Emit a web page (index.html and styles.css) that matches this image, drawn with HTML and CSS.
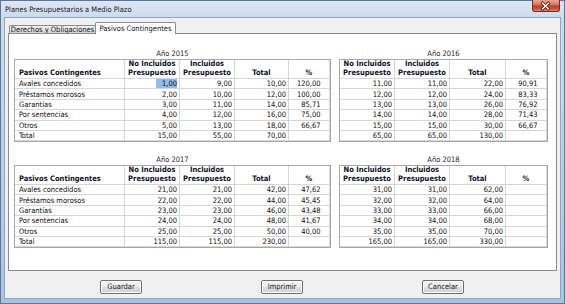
FILE: index.html
```html
<!DOCTYPE html>
<html lang="es">
<head>
<meta charset="utf-8">
<title>Planes Presupuestarios a Medio Plazo</title>
<link rel="stylesheet" href="styles.css">
</head>
<body>
<div class="window">
  <div class="titlebar">
    <span class="title">Planes Presupuestarios a Medio Plazo</span>
    <div class="close">
      <svg width="28" height="12" viewBox="0 0 28 12">
        <path d="M11 3.2 L17 8.8 M17 3.2 L11 8.8" stroke="#6b2216" stroke-width="3.2" stroke-linecap="square" fill="none"/>
        <path d="M11 3.2 L17 8.8 M17 3.2 L11 8.8" stroke="#ffffff" stroke-width="1.5" stroke-linecap="square" fill="none"/>
      </svg>
    </div>
  </div>
  <div class="client">
    <div class="tabs">
      <div class="tab">Derechos y Obligaciones</div>
      <div class="tab active">Pasivos Contingentes</div>
    </div>
    <div class="panel">
      <div class="years">
        <section class="block">
          <div class="year">Año 2015</div>
          <div class="tbl wide">
            <div class="c h lbl">Pasivos Contingentes</div>
            <div class="c h">No Incluidos<br>Presupuesto</div>
            <div class="c h">Incluidos<br>Presupuesto</div>
            <div class="c h">Total</div>
            <div class="c h">%</div>

            <div class="c lbl">Avales concedidos</div><div class="c"><span class="sel">1,00</span></div><div class="c">9,00</div><div class="c">10,00</div><div class="c pct">120,00</div>
            <div class="c lbl">Préstamos morosos</div><div class="c">2,00</div><div class="c">10,00</div><div class="c">12,00</div><div class="c pct">100,00</div>
            <div class="c lbl">Garantías</div><div class="c">3,00</div><div class="c">11,00</div><div class="c">14,00</div><div class="c pct">85,71</div>
            <div class="c lbl">Por sentencias</div><div class="c">4,00</div><div class="c">12,00</div><div class="c">16,00</div><div class="c pct">75,00</div>
            <div class="c lbl">Otros</div><div class="c">5,00</div><div class="c">13,00</div><div class="c">18,00</div><div class="c pct">66,67</div>
            <div class="c lbl">Total</div><div class="c">15,00</div><div class="c">55,00</div><div class="c">70,00</div><div class="c pct"></div>
          </div>
        </section>
        <section class="block">
          <div class="year">Año 2016</div>
          <div class="tbl narrow">
            <div class="c h">No Incluidos<br>Presupuesto</div>
            <div class="c h">Incluidos<br>Presupuesto</div>
            <div class="c h">Total</div>
            <div class="c h">%</div>

            <div class="c">11,00</div><div class="c">11,00</div><div class="c">22,00</div><div class="c pct">90,91</div>
            <div class="c">12,00</div><div class="c">12,00</div><div class="c">24,00</div><div class="c pct">83,33</div>
            <div class="c">13,00</div><div class="c">13,00</div><div class="c">26,00</div><div class="c pct">76,92</div>
            <div class="c">14,00</div><div class="c">14,00</div><div class="c">28,00</div><div class="c pct">71,43</div>
            <div class="c">15,00</div><div class="c">15,00</div><div class="c">30,00</div><div class="c pct">66,67</div>
            <div class="c">65,00</div><div class="c">65,00</div><div class="c">130,00</div><div class="c pct"></div>
          </div>
        </section>
        <section class="block">
          <div class="year">Año 2017</div>
          <div class="tbl wide">
            <div class="c h lbl">Pasivos Contingentes</div>
            <div class="c h">No Incluidos<br>Presupuesto</div>
            <div class="c h">Incluidos<br>Presupuesto</div>
            <div class="c h">Total</div>
            <div class="c h">%</div>

            <div class="c lbl">Avales concedidos</div><div class="c">21,00</div><div class="c">21,00</div><div class="c">42,00</div><div class="c pct">47,62</div>
            <div class="c lbl">Préstamos morosos</div><div class="c">22,00</div><div class="c">22,00</div><div class="c">44,00</div><div class="c pct">45,45</div>
            <div class="c lbl">Garantías</div><div class="c">23,00</div><div class="c">23,00</div><div class="c">46,00</div><div class="c pct">43,48</div>
            <div class="c lbl">Por sentencias</div><div class="c">24,00</div><div class="c">24,00</div><div class="c">48,00</div><div class="c pct">41,67</div>
            <div class="c lbl">Otros</div><div class="c">25,00</div><div class="c">25,00</div><div class="c">50,00</div><div class="c pct">40,00</div>
            <div class="c lbl">Total</div><div class="c">115,00</div><div class="c">115,00</div><div class="c">230,00</div><div class="c pct"></div>
          </div>
        </section>
        <section class="block">
          <div class="year">Año 2018</div>
          <div class="tbl narrow">
            <div class="c h">No Incluidos<br>Presupuesto</div>
            <div class="c h">Incluidos<br>Presupuesto</div>
            <div class="c h">Total</div>
            <div class="c h">%</div>

            <div class="c">31,00</div><div class="c">31,00</div><div class="c">62,00</div><div class="c pct"></div>
            <div class="c">32,00</div><div class="c">32,00</div><div class="c">64,00</div><div class="c pct"></div>
            <div class="c">33,00</div><div class="c">33,00</div><div class="c">66,00</div><div class="c pct"></div>
            <div class="c">34,00</div><div class="c">34,00</div><div class="c">68,00</div><div class="c pct"></div>
            <div class="c">35,00</div><div class="c">35,00</div><div class="c">70,00</div><div class="c pct"></div>
            <div class="c">165,00</div><div class="c">165,00</div><div class="c">330,00</div><div class="c pct"></div>
          </div>
        </section>
      </div>
    </div>
    <div class="buttons">
      <button class="btn">Guardar</button>
      <button class="btn">Imprimir</button>
      <button class="btn">Cancelar</button>
    </div>
  </div>
</div>
</body>
</html>
```

FILE: styles.css
```css
* { box-sizing: border-box; }

html, body {
  margin: 0;
  padding: 0;
  background: #ffffff;
}

body {
  font-family: "DejaVu Sans Condensed", "DejaVu Sans", sans-serif;
  font-stretch: condensed;
  font-size: 7.5px;
  color: #0e0e0e;
}

.window {
  width: 565px;
  height: 304px;
  display: flex;
  flex-direction: column;
  border: 1px solid #5b7897;
  background: linear-gradient(180deg, #dce7f4 0px, #cbdcef 16px, #bed3ea 40%, #b3cbe7 75%, #a9c3e3 100%);
}

.titlebar {
  height: 16px;
  display: flex;
  align-items: center;
  padding-left: 4px;
}

.title {
  color: #1a1a1a;
  white-space: nowrap;
}

.close {
  margin-left: auto;
  margin-right: 4px;
  margin-top: -1px;
  align-self: flex-start;
  width: 28px;
  height: 12px;
  border: 1px solid #7a2a1e;
  border-top: none;
  border-radius: 0 0 3px 3px;
  background: linear-gradient(180deg, #e9a694 0%, #d97a64 40%, #c4402b 55%, #c8503a 80%, #de8c70 100%);
  display: flex;
}

.close svg {
  display: block;
  margin-left: -1px;
}

.client {
  flex: 1;
  margin: 0 3px 4px 3px;
  border: 1px solid #90a6c0;
  background: #f0f0f0;
  display: flex;
  flex-direction: column;
}

.tabs {
  margin-top: 4px;
  height: 11px;
  padding-left: 4px;
  display: flex;
  align-items: flex-end;
}

.tab {
  width: 87px;
  height: 8px;
  border: 1px solid #898c95;
  border-bottom: none;
  border-radius: 2px 2px 0 0;
  background: linear-gradient(180deg, #f3f3f3 0%, #ebebeb 50%, #dedede 51%, #d2d2d2 100%);
  display: flex;
  align-items: center;
  justify-content: center;
  white-space: nowrap;
  color: #151515;
}

.tab.active {
  width: 81px;
  height: 12px;
  margin-left: -1px;
  margin-bottom: -1px;
  background: #ffffff;
  position: relative;
  z-index: 1;
  padding-bottom: 1px;
}

.panel {
  height: 238px;
  margin: 0 3px;
  border: 1px solid #898c95;
  background: #ffffff;
  padding: 14px 0 0 5px;
}

.years {
  display: grid;
  grid-template-columns: 317px 209px;
  column-gap: 8px;
  row-gap: 11.6px;
}

.block {
  display: flex;
  flex-direction: column;
}

.year {
  height: 11px;
  line-height: 11px;
  text-align: center;
  color: #1e1e1e;
}

.tbl {
  display: grid;
  gap: 1px;
  grid-template-rows: 18px repeat(6, 9.4px);
  background: #d6d6d6;
  border: 1px solid #a8a8a8;
  padding: 0 1px 1px 0;
}

.tbl.wide {
  grid-template-columns: 109px 54px 54px 53px 40px;
}

.tbl.narrow {
  grid-template-columns: 54px 54px 55px 40px;
}

.c {
  background: #ffffff;
  display: flex;
  align-items: center;
  justify-content: flex-end;
  padding: 0 2px 0 2px;
  white-space: nowrap;
  line-height: 9px;
  overflow: hidden;
}

.c.lbl {
  justify-content: flex-start;
  padding-left: 4px;
}

.c.pct {
  padding-right: 8.5px;
}

.c.h {
  font-weight: bold;
  color: #0c1226;
  align-items: flex-end;
  justify-content: center;
  text-align: center;
  line-height: 8.3px;
  padding: 0 0 1px 0;
}

.c.h.lbl {
  justify-content: flex-start;
  padding-left: 4px;
}

.sel {
  align-self: stretch;
  display: flex;
  align-items: center;
  padding-left: 6px;
  background: #8fbcee;
}

.buttons {
  margin-top: 9px;
  height: 14px;
  padding: 0 96px 0 95px;
  display: flex;
  justify-content: space-between;
}

.btn {
  width: 42px;
  height: 14px;
  padding: 0;
  border: 1px solid #707070;
  border-radius: 2px;
  background: linear-gradient(180deg, #f4f4f4 0%, #ececec 48%, #dedede 52%, #d2d2d2 100%);
  box-shadow: inset 0 0 0 1px #fbfbfb;
  font-family: inherit;
  font-stretch: condensed;
  font-size: 7.5px;
  color: #1a1a1a;
  line-height: 12px;
}
```
